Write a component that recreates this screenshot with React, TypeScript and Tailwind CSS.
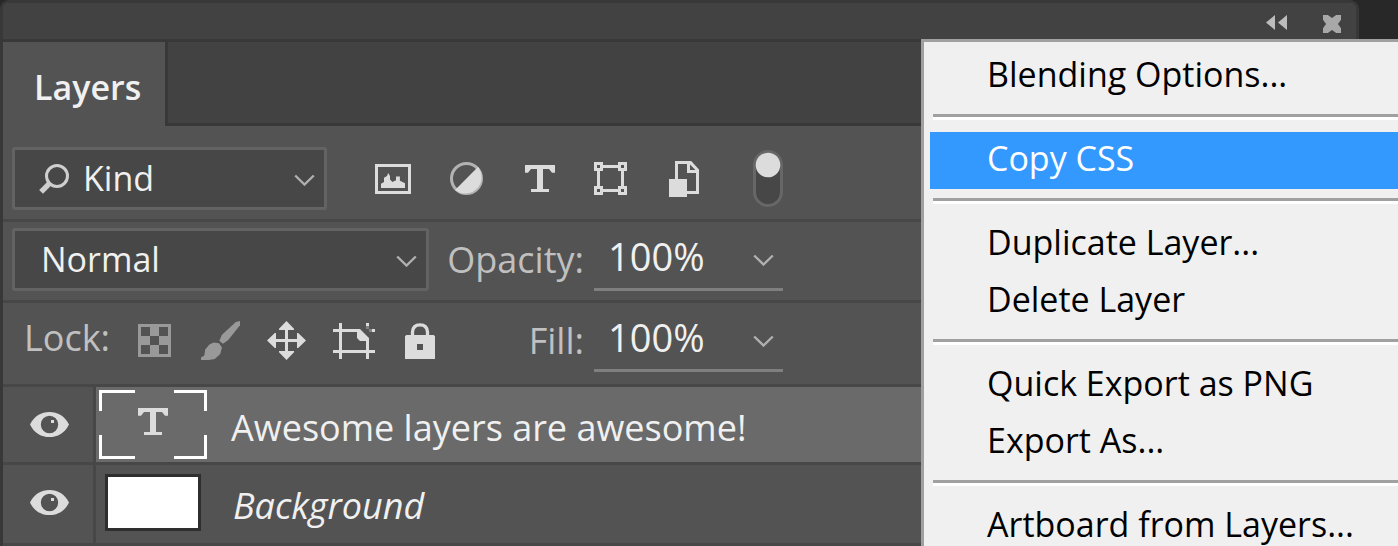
import type { ReactNode } from "react";

type IconProps = { w: number; h: number; className?: string; children: ReactNode };

// Icons are drawn on a coarse grid: one unit covers three screen pixels.
function Icon({ w, h, className = "text-[#dcdcdc]", children }: IconProps) {
  return (
    <svg
      width={w * 3}
      height={h * 3}
      viewBox={`0 0 ${w} ${h}`}
      fill="currentColor"
      className={`block shrink-0 ${className}`}
      aria-hidden="true"
    >
      {children}
    </svg>
  );
}

const Chevron = ({ className }: { className: string }) => (
  <Icon w={7} h={4} className={className}>
    <path d="M.4.5 3.5 3.5 6.6.5" fill="none" stroke="currentColor" strokeWidth=".8" />
  </Icon>
);

const SearchIcon = () => (
  <Icon w={10} h={10} className="text-[#cfcfcf]">
    <circle cx="6" cy="4" r="3.5" fill="none" stroke="currentColor" />
    <path d="M3.6 6.4.7 9.3" stroke="currentColor" strokeWidth="1.8" />
  </Icon>
);

const PixelIcon = () => (
  <Icon w={12} h={10}>
    <path d="M0 0h12v10H0zM1 1v8h10V1z" fillRule="evenodd" />
    <path d="M2 8V6.6L3 6V4.6L4 4l.4-1L5 4v1.2l.8.8L7 5.4V4.2h1.3V5.6L10 6.4V8z" />
  </Icon>
);

const AdjustmentIcon = () => (
  <Icon w={11} h={11}>
    <circle cx="5.5" cy="5.5" r="5" fill="none" stroke="currentColor" strokeWidth="1" opacity=".7" />
    <path d="M9.3 1.7A5.4 5.4 0 0 1 1.7 9.3z" />
  </Icon>
);

const TypeIcon = () => (
  <Icon w={10} h={9}>
    <path d="M0 0h10v2.6H9L8 1.3H6V8h2v1H2V8h2V1.3H2L1 2.6H0z" />
  </Icon>
);

const ShapeIcon = () => (
  <Icon w={11} h={11}>
    <path
      fillRule="evenodd"
      d="M0 0h3v1h5V0h3v3h-1v5h1v3H8v-1H3v1H0V8h1V3H0zM1 1v1h1V1zM9 1v1h1V1zM1 9v1h1V9zM9 9v1h1V9zM3 2v1H2v5h1v1h5V8h1V3H8V2z"
    />
  </Icon>
);

const SmartIcon = () => (
  <Icon w={10} h={12}>
    <path d="M0 6h6v6H0z" />
    <path d="M2 6V0h5.4L10 2.8V11H6v-1h3V4H6V1H3v5zM7 1.2V3h1.8z" fillRule="evenodd" />
  </Icon>
);

const CheckerIcon = () => (
  <Icon w={11} h={11} className="text-[#999999]">
    <path
      fillRule="evenodd"
      d="M0 0h11v11H0zM1 1v3h3V1zM7 1v3h3V1zM4 4v3h3V4zM1 7v3h3V7zM7 7v3h3V7z"
    />
  </Icon>
);

const BrushIcon = () => (
  <Icon w={13} h={13} className="text-[#999999]">
    <path d="M13 0v1.4L9 6.4 7.3 7.6 6.1 6.6 7 4.6 11.6.3z" />
    <path d="M4.2 7.2 6 7.4 7 8.8 6.4 11 4.6 12.7 2.6 13H0v-.8l1.1-.7.3-2L2.8 7.8z" />
  </Icon>
);

const MoveIcon = () => (
  <Icon w={13} h={13}>
    <path d="M6.5 0 9 2.6V3H7v3h3V4h.4L13 6.5 10.4 9H10V7H7v3h2v.4L6.5 13 4 10.4V10h2V7H3v2h-.4L0 6.5 2.6 4H3v2h3V3H4v-.4z" />
  </Icon>
);

const ArtboardIcon = () => (
  <Icon w={14} h={12}>
    <path d="M2 0h1v2h6l3 3v5h-1v2h-.01H11V6H9L8 5V3H3v9H2v-2H0V9h2V3H0V2h2z" />
    <path d="M3 9h11v1H3zM11 10h1v2h-1zM13 2h1v1h-1zM11 0h1v1h-1z" />
    <path d="M11 1h1v1h-1zM12 2h1v1h-1z" opacity=".35" />
  </Icon>
);

const PadlockIcon = () => (
  <Icon w={10} h={12}>
    <path d="M2.5 4.5V3Q2.6.6 5 .6T7.5 3v1.5" fill="none" stroke="currentColor" strokeWidth="1.1" />
    <path d="M.4 4h9.2l.4.4V12H0V4.4zM4 7v2h2V7z" fillRule="evenodd" />
  </Icon>
);

const EyeIcon = () => (
  <Icon w={13} h={9}>
    <path
      fillRule="evenodd"
      d="M0 4.5C1.4 1.6 3.8.3 6.5.3S11.6 1.6 13 4.5C11.6 7.4 9.2 8.7 6.5 8.7S1.4 7.4 0 4.5zM6.5 1.6A2.9 2.9 0 1 0 6.5 7.4 2.9 2.9 0 1 0 6.5 1.6z"
    />
    <path d="M7 3h1v1H7z" />
  </Icon>
);

function IconButton({ label, className = "", children }: { label: string; className?: string; children: ReactNode }) {
  return (
    <button type="button" aria-label={label} className={`flex items-center justify-center ${className}`}>
      {children}
    </button>
  );
}

function Dropdown({ label, value, className, pad, icon }: {
  label: string;
  value: string;
  className: string;
  pad: string;
  icon?: ReactNode;
}) {
  return (
    <div className={`grid h-[63px] shrink-0 items-center ${className}`}>
      <select
        aria-label={label}
        className={`col-start-1 row-start-1 h-full w-full appearance-none rounded-[3px] border-[3px] border-[#636363] bg-[#474747] text-[34px] text-[#f0f0f0] outline-none ${pad}`}
      >
        <option>{value}</option>
      </select>
      {icon && <span className="pointer-events-none col-start-1 row-start-1 ml-[27px] justify-self-start">{icon}</span>}
      <span className="pointer-events-none col-start-1 row-start-1 mr-3 justify-self-end">
        <Chevron className="mt-[3px] text-[#b0b0b0]" />
      </span>
    </div>
  );
}

function Percent({ id, label }: { id: string; label: string }) {
  return (
    <>
      <label htmlFor={id} className="text-[36px] leading-[63px] text-[#c0c0c0]">
        {label}
      </label>
      <div className="ml-[10px] flex h-[63px] w-[189px] shrink-0 items-center border-b-[3px] border-[#7f7f7f] pb-[3px]">
        <input
          id={id}
          defaultValue="100%"
          className="w-full min-w-0 bg-transparent pl-[14px] text-[38px] text-[#f0f0f0] outline-none"
        />
        <button type="button" aria-label={`${label} slider`} className="pr-[9px]">
          <Chevron className="mt-[6px] text-[#b0b0b0]" />
        </button>
      </div>
    </>
  );
}

function Layer({ name, selected, italic, children }: {
  name: string;
  selected?: boolean;
  italic?: boolean;
  children: ReactNode;
}) {
  return (
    <li className={`flex items-stretch border-b-[3px] border-[#474747] ${selected ? "h-[78px]" : "h-[81px]"}`}>
      <button
        type="button"
        aria-label={`Toggle ${name} visibility`}
        className={`flex w-[93px] shrink-0 items-center justify-center border-r-[3px] border-[#474747] pl-[3px] ${
          selected ? "" : "pb-[3px]"
        }`}
      >
        <EyeIcon />
      </button>
      <div className={`flex flex-1 items-center ${selected ? "bg-[#6a6a6a]" : "pb-[3px]"}`}>
        <div className="flex w-[135px] shrink-0 items-center pl-[3px]">{children}</div>
        <button
          type="button"
          className={`pt-[6px] text-[36px] leading-[48px] text-[#f0f0f0] ${italic ? "pl-[2px] italic" : ""}`}
        >
          {name}
        </button>
      </div>
    </li>
  );
}

function LayerMenu() {
  const groups = [
    ["Blending Options..."],
    ["Copy CSS"],
    ["Duplicate Layer...", "Delete Layer"],
    ["Quick Export as PNG", "Export As..."],
    ["Artboard from Layers..."],
  ];
  return (
    <div
      role="menu"
      className="absolute top-[39px] right-0 w-[477px] border-t-[3px] border-l-[3px] border-[#a0a0a0] bg-[#f0f0f0] pt-[6px] pl-[6px]"
    >
      {groups.map((items, i) => (
        <div key={items[0]}>
          {i > 0 && <div role="separator" className="mt-[9px] mb-3 ml-[3px] h-[6px] border-t-[3px] border-[#a0a0a0] bg-white" />}
          {items.map((item) => (
            <button
              key={item}
              type="button"
              role="menuitem"
              className={`block w-full pb-1 pl-[57px] text-left text-[34px] leading-[53px] whitespace-nowrap ${
                item === "Copy CSS" ? "bg-[#3399ff] text-white" : "text-black"
              }`}
            >
              {item}
            </button>
          ))}
        </div>
      ))}
    </div>
  );
}

export default function App() {
  return (
    <div className="relative h-screen overflow-hidden bg-[#282828] font-['Open_Sans','Noto_Sans',sans-serif]">
      <section className="mr-[39px] min-h-full rounded-t-[9px] border-t-[3px] border-r-[3px] border-l-[3px] border-[#383838] bg-[#535353]">
        <header className="flex h-[39px] items-start justify-end gap-9 rounded-t-[6px] border-b-[3px] border-[#383838] bg-[#424242] pt-3 pr-[15px]">
          <IconButton label="Collapse panel">
            <Icon w={7} h={5} className="text-[#bcbcbc]">
              <path d="M3 0v5L0 2.5zM7 0v5L4 2.5z" />
            </Icon>
          </IconButton>
          <IconButton label="Close panel">
            <Icon w={6} h={6} className="text-[#a8a8a8]">
              <path d="M0 0h1.6L3 1 4.4 0H6v1.6L5 3l1 1.4V6H4.4L3 5 1.6 6H0V4.4L1 3 0 1.6z" />
            </Icon>
          </IconButton>
        </header>

        <div role="tablist" className="flex h-[84px]">
          <button
            type="button"
            role="tab"
            aria-selected="true"
            className="w-[162px] shrink-0 pt-[6px] pl-[31px] text-left text-[34px] font-semibold text-[#f0f0f0]"
          >
            Layers
          </button>
          <div className="flex-1 border-b-[3px] border-l-[3px] border-[#383838] bg-[#424242]" />
        </div>

        <div className="flex items-center border-b-[3px] border-[#474747] pt-[21px] pb-[9px] pl-[9px]">
          <Dropdown label="Filter by" value="Kind" className="w-[315px]" pad="pl-[68px]" icon={<SearchIcon />} />
          <div className="ml-12 flex items-center gap-[39px]">
            <IconButton label="Pixel layers"><PixelIcon /></IconButton>
            <IconButton label="Adjustment layers"><AdjustmentIcon /></IconButton>
            <IconButton label="Type layers" className="ml-[3px]"><TypeIcon /></IconButton>
            <IconButton label="Shape layers"><ShapeIcon /></IconButton>
            <IconButton label="Smart objects" className="ml-[3px]"><SmartIcon /></IconButton>
          </div>
          <button type="button" role="switch" aria-checked="true" aria-label="Layer filtering" className="ml-[54px]">
            <Icon w={10} h={19}>
              <rect x=".5" y=".5" width="9" height="18" rx="4.5" fill="#474747" stroke="#676767" />
              <circle cx="5" cy="5" r="4.1" />
            </Icon>
          </button>
        </div>

        <div className="flex items-center border-b-[3px] border-[#474747] pt-[6px] pb-[9px] pl-[9px]">
          <Dropdown label="Blend mode" value="Normal" className="w-[417px]" pad="pl-[26px]" />
          <div className="flex w-[354px] items-center justify-end">
            <Percent id="opacity" label="Opacity:" />
          </div>
        </div>

        <div className="flex items-center border-b-[3px] border-[#474747] pt-[6px] pb-3 pl-[21px]">
          <span className="w-[114px] shrink-0 pb-[6px] text-[36px] leading-[51px] text-[#c0c0c0]">Lock:</span>
          <div className="flex items-center gap-[27px]">
            <IconButton label="Lock transparent pixels" className="mr-[3px]"><CheckerIcon /></IconButton>
            <IconButton label="Lock image pixels"><BrushIcon /></IconButton>
            <IconButton label="Lock position"><MoveIcon /></IconButton>
            <IconButton label="Prevent auto-nesting"><ArtboardIcon /></IconButton>
            <IconButton label="Lock all" className="ml-[3px]"><PadlockIcon /></IconButton>
          </div>
          <div className="ml-[60px] flex w-[288px] items-center justify-end">
            <Percent id="fill" label="Fill:" />
          </div>
        </div>

        <ul>
          <Layer name="Awesome layers are awesome!" selected>
            <Icon w={36} h={23} className="text-white">
              <path d="M0 0h12v1H1v6H0zM25 0h11v7h-1V1H25zM0 15h1v7h11v1H0zM35 15h1v8H25v-1h10z" />
              <path fill="#dcdcdc" d="M13 6h10v2.6h-1l-1-1.3h-2V14h2v1h-6v-1h2V7.3h-2l-1 1.3h-1z" />
            </Icon>
          </Layer>
          <Layer name="Background" italic>
            <div className="ml-[6px] h-[57px] w-24 border-[3px] border-[#2e2e2e] bg-white" />
          </Layer>
        </ul>
      </section>
      <LayerMenu />
    </div>
  );
}
